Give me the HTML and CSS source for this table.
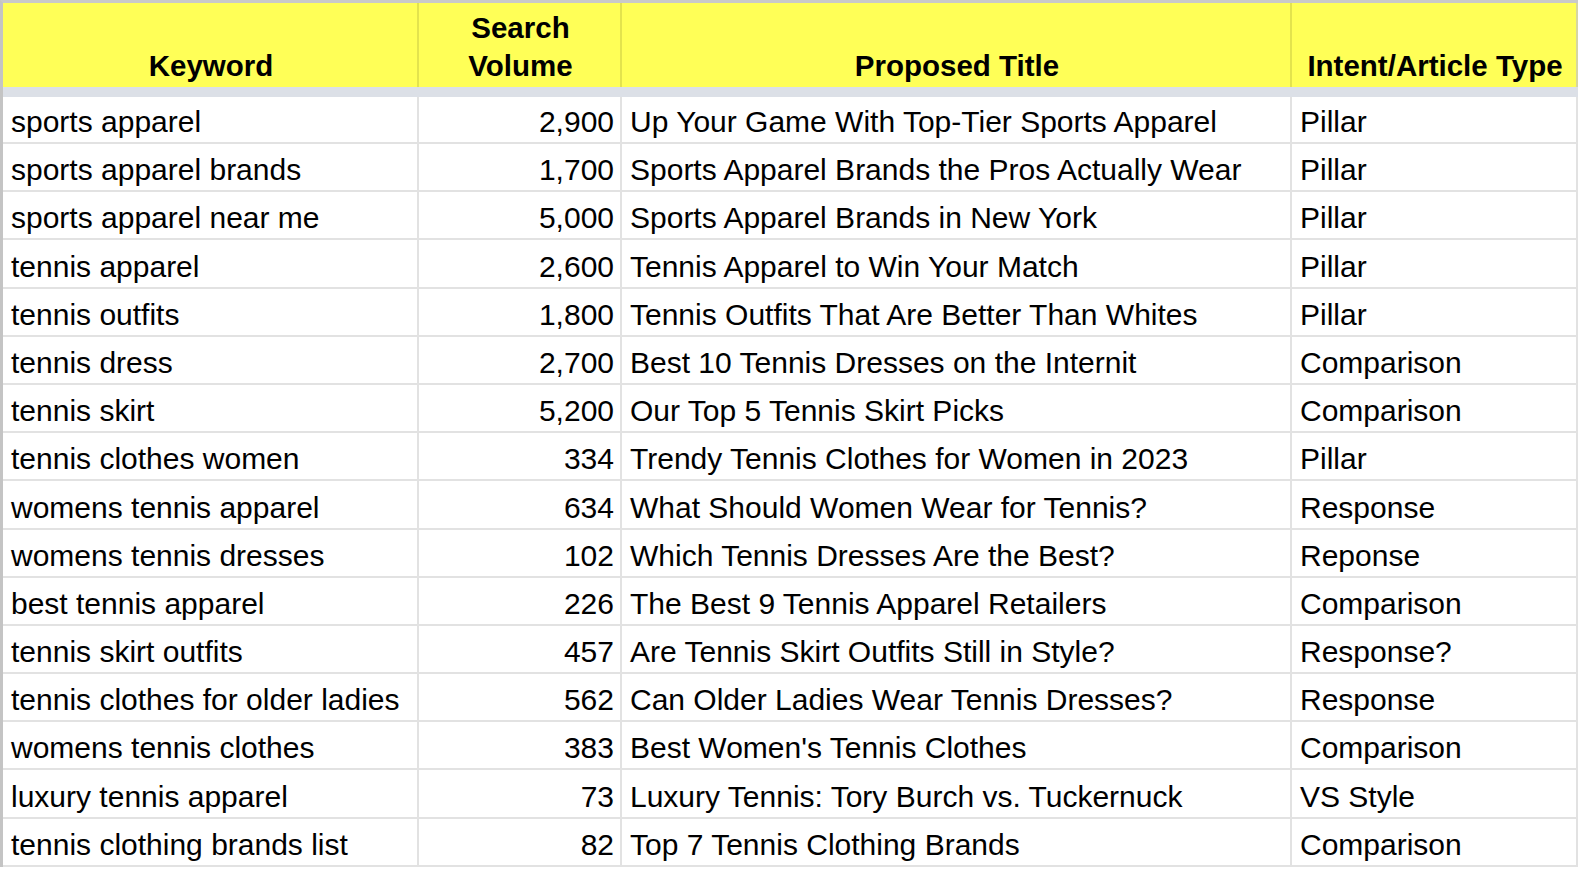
FILE: index.html
```html
<!DOCTYPE html>
<html lang="en">
<head>
<meta charset="utf-8">
<title>Keyword Plan</title>
<link rel="stylesheet" href="styles.css">
</head>
<body>
<div class="sheet">
  <div class="row head">
    <div class="cell">Keyword</div>
    <div class="cell">Search<br>Volume</div>
    <div class="cell">Proposed Title</div>
    <div class="cell">Intent/Article Type</div>
  </div>
  <div class="freeze"></div>
  <div class="row first"><div class="cell">sports apparel</div><div class="cell num">2,900</div><div class="cell">Up Your Game With Top-Tier Sports Apparel</div><div class="cell">Pillar</div></div>
  <div class="row"><div class="cell">sports apparel brands</div><div class="cell num">1,700</div><div class="cell">Sports Apparel Brands the Pros Actually Wear</div><div class="cell">Pillar</div></div>
  <div class="row"><div class="cell">sports apparel near me</div><div class="cell num">5,000</div><div class="cell">Sports Apparel Brands in New York</div><div class="cell">Pillar</div></div>
  <div class="row"><div class="cell">tennis apparel</div><div class="cell num">2,600</div><div class="cell">Tennis Apparel to Win Your Match</div><div class="cell">Pillar</div></div>
  <div class="row"><div class="cell">tennis outfits</div><div class="cell num">1,800</div><div class="cell">Tennis Outfits That Are Better Than Whites</div><div class="cell">Pillar</div></div>
  <div class="row"><div class="cell">tennis dress</div><div class="cell num">2,700</div><div class="cell">Best 10 Tennis Dresses on the Internit</div><div class="cell">Comparison</div></div>
  <div class="row"><div class="cell">tennis skirt</div><div class="cell num">5,200</div><div class="cell">Our Top 5 Tennis Skirt Picks</div><div class="cell">Comparison</div></div>
  <div class="row"><div class="cell">tennis clothes women</div><div class="cell num">334</div><div class="cell">Trendy Tennis Clothes for Women in 2023</div><div class="cell">Pillar</div></div>
  <div class="row"><div class="cell">womens tennis apparel</div><div class="cell num">634</div><div class="cell">What Should Women Wear for Tennis?</div><div class="cell">Response</div></div>
  <div class="row"><div class="cell">womens tennis dresses</div><div class="cell num">102</div><div class="cell">Which Tennis Dresses Are the Best?</div><div class="cell">Reponse</div></div>
  <div class="row"><div class="cell">best tennis apparel</div><div class="cell num">226</div><div class="cell">The Best 9 Tennis Apparel Retailers</div><div class="cell">Comparison</div></div>
  <div class="row"><div class="cell">tennis skirt outfits</div><div class="cell num">457</div><div class="cell">Are Tennis Skirt Outfits Still in Style?</div><div class="cell">Response?</div></div>
  <div class="row"><div class="cell">tennis clothes for older ladies</div><div class="cell num">562</div><div class="cell">Can Older Ladies Wear Tennis Dresses?</div><div class="cell">Response</div></div>
  <div class="row"><div class="cell">womens tennis clothes</div><div class="cell num">383</div><div class="cell">Best Women's Tennis Clothes</div><div class="cell">Comparison</div></div>
  <div class="row"><div class="cell">luxury tennis apparel</div><div class="cell num">73</div><div class="cell">Luxury Tennis: Tory Burch vs. Tuckernuck</div><div class="cell">VS Style</div></div>
  <div class="row"><div class="cell">tennis clothing brands list</div><div class="cell num">82</div><div class="cell">Top 7 Tennis Clothing Brands</div><div class="cell">Comparison</div></div>
</div>
</body>
</html>
```
FILE: styles.css
```css
html, body {
  margin: 0;
  padding: 0;
  background: #ffffff;
  overflow: hidden;
}

.sheet {
  width: 1575px;
  border-top: 3px solid #c9c9c9;
  border-left: 3px solid #c4c4c4;
  font-family: "Liberation Sans", Arial, sans-serif;
  color: #000000;
}

.row {
  display: grid;
  grid-template-columns: 416px 203px 670px 286px;
  height: 48.2px;
}

.row.first {
  height: 47px;
}

.cell {
  box-sizing: border-box;
  border-right: 2px solid #e2e2e2;
  border-bottom: 2px solid #e2e2e2;
  padding: 0 6px 3px 8px;
  font-size: 30px;
  line-height: 34px;
  white-space: nowrap;
  overflow: hidden;
  display: flex;
  align-items: flex-end;
}

.num {
  justify-content: flex-end;
  padding-right: 6px;
}

.head {
  height: 84px;
  background: #ffff57;
}

.head .cell {
  border-right-color: #e3e34d;
  border-bottom: 0;
  justify-content: center;
  text-align: center;
  font-weight: bold;
  font-size: 29.5px;
  line-height: 38px;
  padding-bottom: 2px;
}

.head .cell:last-child {
  border-right-color: #d6d6a0;
}

.freeze {
  height: 10px;
  background: #dce0e7;
}
```
